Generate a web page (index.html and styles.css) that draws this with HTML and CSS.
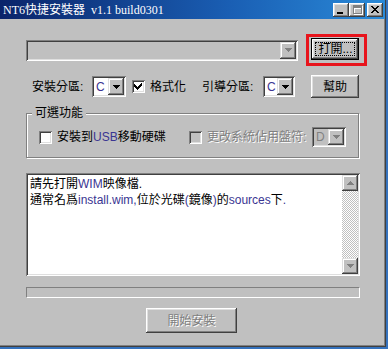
FILE: index.html
```html
<!DOCTYPE html>
<html>
<head>
<meta charset="utf-8">
<link rel="stylesheet" href="styles.css">
</head>
<body>
<div class="window">
  <div class="titlebar">
    <span class="title">NT6快捷安裝器&nbsp;&nbsp;v1.1 build0301</span>
    <div class="tbtns">
      <span class="tbtn"><svg width="16" height="14" shape-rendering="crispEdges"><rect x="4" y="9" width="6" height="2" fill="#000"/></svg></span>
      <span class="tbtn"><svg width="16" height="14" shape-rendering="crispEdges"><path d="M5 3h9v9h-9z M6 6h7v5h-7z" fill="#fff" fill-rule="evenodd"/><path d="M4 2h9v9h-9z M5 5h7v5h-7z" fill="#808080" fill-rule="evenodd"/></svg></span>
      <span class="tbtn close"><svg width="16" height="14" shape-rendering="crispEdges"><path d="M4 3h2v1h1v1h2v-1h1v-1h2v1h-1v1h-1v1h-1v1h1v1h1v1h1v1h-2v-1h-1v-1h-2v1h-1v1h-2v-1h1v-1h1v-1h1v-1h-1v-1h-1v-1h-1z" fill="#000"/></svg></span>
    </div>
  </div>
  <div class="content">
    <div class="row1">
      <div class="combo sunken wide disabled">
        <span class="val"></span>
        <span class="drop"><svg width="7" height="4" shape-rendering="crispEdges"><path d="M0 0h7v1h-1v1h-1v1h-1v1h-1v-1h-1v-1h-1v-1h-1z" fill="#808080"/></svg></span>
      </div>
      <div class="highlight">
        <button class="btn default">打開...</button>
      </div>
    </div>

    <div class="row2">
      <span class="label l-part">安裝分區:</span>
      <div class="combo sunken c-small">
        <span class="val"><span class="en">C</span></span>
        <span class="drop"><svg width="7" height="4" shape-rendering="crispEdges"><path d="M0 0h7v1h-1v1h-1v1h-1v1h-1v-1h-1v-1h-1v-1h-1z" fill="#000"/></svg></span>
      </div>
      <span class="check sunken chk-format"><svg width="9" height="9" shape-rendering="crispEdges"><path d="M7 1h1v3h-1v1h-1v1h-1v1h-1v1h-1v-1h-1v-1h-1v-1h-1v-3h1v1h1v1h1v1h1v-1h1v-1h1v-1h1z" fill="#000"/></svg></span>
      <span class="label l-format">格式化</span>
      <span class="label l-boot">引導分區:</span>
      <div class="combo sunken c-boot">
        <span class="val"><span class="en">C</span></span>
        <span class="drop"><svg width="7" height="4" shape-rendering="crispEdges"><path d="M0 0h7v1h-1v1h-1v1h-1v1h-1v-1h-1v-1h-1v-1h-1z" fill="#000"/></svg></span>
      </div>
      <button class="btn help">幫助</button>
    </div>

    <div class="group">
      <div class="group-title">可選功能</div>
      <div class="group-row">
        <span class="check sunken chk-usb"></span>
        <span class="label l-usb">安裝到<span class="en">USB</span>移動硬碟</span>
        <span class="check sunken disabled-check"></span>
        <span class="label dis l-drive">更改系統佔用盤符:</span>
        <div class="combo sunken disabled c-drive">
          <span class="val dis-val">D</span>
          <span class="drop"><svg width="7" height="4" shape-rendering="crispEdges"><path d="M0 0h7v1h-1v1h-1v1h-1v1h-1v-1h-1v-1h-1v-1h-1z" fill="#808080"/></svg></span>
        </div>
      </div>
    </div>

    <div class="textbox sunken">
      <div class="text">
        <div>請先打開<span class="en">WIM</span>映像檔.</div>
        <div>通常名爲<span class="en">install.wim,</span>位於光碟<span class="en">(</span>鏡像<span class="en">)</span>的<span class="en">sources</span>下<span class="en">.</span></div>
      </div>
      <div class="vscroll">
        <span class="sbtn"><svg width="7" height="4" shape-rendering="crispEdges"><path d="M3 0h1v1h1v1h1v1h1v1h-7v-1h1v-1h1v-1h1z" fill="#808080"/></svg></span>
        <span class="track"></span>
        <span class="sbtn"><svg width="7" height="4" shape-rendering="crispEdges"><path d="M0 0h7v1h-1v1h-1v1h-1v1h-1v-1h-1v-1h-1v-1h-1z" fill="#808080"/></svg></span>
      </div>
    </div>

    <div class="progress"></div>

    <div class="start-row">
      <button class="btn start"><span class="dis">開始安裝</span></button>
    </div>
  </div>
</div>
</body>
</html>
```

FILE: styles.css
```css
html, body {
  margin: 0;
  padding: 0;
}
body {
  width: 388px;
  height: 349px;
  background: #3572bd;
  overflow: hidden;
  font-family: "Liberation Sans", "Noto Sans CJK TC", sans-serif;
  font-size: 12px;
  color: #000;
}
.window {
  width: 386px;
  height: 347px;
  box-sizing: border-box;
  background: #c0c0c0;
  border-right: 1px solid #404040;
  border-bottom: 1px solid #404040;
  box-shadow: inset -1px -1px #808080;
  display: flex;
  flex-direction: column;
}
.titlebar {
  height: 19px;
  flex: none;
  background: linear-gradient(to right, #0a246a 0%, #1a5fb4 60%, #2a8ad8 100%);
  display: flex;
  align-items: center;
  justify-content: space-between;
  padding-left: 3px;
  padding-right: 2px;
}
.title {
  color: #fff;
  font-family: "Liberation Serif", "Noto Sans CJK TC", serif;
  font-size: 12px;
  line-height: 14px;
  white-space: nowrap;
  margin-top: 1px;
}
.tbtns {
  display: flex;
  align-items: center;
  margin-top: 1px;
}
.tbtn {
  width: 16px;
  height: 14px;
  background: #c0c0c0;
  box-shadow: inset -1px -1px #404040, inset 1px 1px #fff, inset -2px -2px #808080, inset 2px 2px #dfdfdf;
  display: block;
}
.tbtn svg { display: block; }
.tbtn.close { margin-left: 2px; }

.content {
  padding-left: 26px;
  display: flex;
  flex-direction: column;
}

.sunken {
  box-shadow: inset 1px 1px #808080, inset -1px -1px #fff, inset 2px 2px #404040, inset -2px -2px #dfdfdf;
}
.btn {
  font: inherit;
  color: #000;
  background: #c0c0c0;
  border: none;
  padding: 0;
  margin: 0;
  box-sizing: border-box;
  box-shadow: inset -1px -1px #404040, inset 1px 1px #fff, inset -2px -2px #808080, inset 2px 2px #dfdfdf;
  display: flex;
  align-items: center;
  justify-content: center;
  line-height: 14px;
}

.row1 {
  margin-top: 15px;
  display: flex;
  align-items: center;
  height: 32px;
}
.combo {
  box-sizing: border-box;
  height: 21px;
  padding: 2px;
  background: #fff;
  display: flex;
  align-items: stretch;
}
.combo.disabled { background: #c0c0c0; }
.combo .val {
  flex: 1;
  display: flex;
  align-items: center;
  padding-left: 2px;
  line-height: 14px;
}
.combo .drop {
  width: 16px;
  flex: none;
  background: #c0c0c0;
  box-shadow: inset -1px -1px #404040, inset 1px 1px #dfdfdf, inset -2px -2px #808080, inset 2px 2px #fff;
  display: flex;
  align-items: center;
  justify-content: center;
}
.combo .drop svg { display: block; }
.wide { width: 272px; }
.highlight {
  margin-left: 8px;
  border: 3px solid #e8141c;
  padding: 1px 5px 3px 2px;
  display: flex;
}
.btn.default {
  width: 48px;
  height: 22px;
  border: 1px solid #000;
  box-shadow: inset -1px -1px #404040, inset 1px 1px #fff, inset -2px -2px #808080, inset 2px 2px #dfdfdf;
  outline: 1px dotted #000;
  outline-offset: -5px;
  padding-left: 1px;
}

.row2 {
  margin-top: 9px;
  height: 23px;
  display: flex;
  align-items: center;
}
.label {
  white-space: nowrap;
  line-height: 14px;
}
.l-part { margin-left: 6px; width: 60px; }
.c-small { width: 34px; }
.check {
  width: 13px;
  height: 13px;
  box-sizing: border-box;
  background: #fff;
  flex: none;
  display: flex;
  align-items: center;
  justify-content: center;
}
.check svg { display: block; margin: 0 0 0 0; }
.chk-format { margin-left: 6px; }
.l-format { margin-left: 5px; width: 52px; }
.l-boot { width: 61px; }
.c-boot { width: 32px; }
.help {
  width: 48px;
  height: 23px;
  margin-left: 16px;
}

.group {
  margin-top: 15px;
  width: 333px;
  height: 45px;
  box-sizing: border-box;
  border: 1px solid #808080;
  box-shadow: inset 1px 1px #fff, 1px 1px #fff;
}
.group-title {
  margin-top: -7px;
  margin-left: 5px;
  padding: 0 3px;
  width: fit-content;
  background: #c0c0c0;
  line-height: 13px;
}
.group-row {
  margin-top: 7px;
  height: 20px;
  display: flex;
  align-items: center;
}
.chk-usb { margin-left: 12px; }
.l-usb { margin-left: 5px; width: 132px; }
.disabled-check { background: #c0c0c0; }
.l-drive { margin-left: 5px; width: 105px; }
.dis, .label.dis {
  color: #808080;
  text-shadow: 1px 1px 0 #fff;
}
.c-drive { width: 34px; height: 20px; }
.dis-val { color: #808080; }

.en { color: #3a3592; }

.textbox {
  margin-top: 15px;
  width: 334px;
  height: 103px;
  box-sizing: border-box;
  padding: 2px;
  background: #fff;
  display: flex;
}
.text {
  flex: 1;
  padding: 1px 0 0 2px;
  line-height: 16px;
  white-space: nowrap;
}
.vscroll {
  width: 16px;
  display: flex;
  flex-direction: column;
}
.sbtn {
  height: 16px;
  flex: none;
  background: #c0c0c0;
  box-shadow: inset -1px -1px #404040, inset 1px 1px #dfdfdf, inset -2px -2px #808080, inset 2px 2px #fff;
  display: flex;
  align-items: center;
  justify-content: center;
}
.sbtn svg { display: block; }
.track {
  flex: 1;
  background: repeating-conic-gradient(#c0c0c0 0 25%, #ffffff 0 50%) 0 0 / 2px 2px;
}

.progress {
  margin-top: 11px;
  width: 334px;
  height: 11px;
  box-sizing: border-box;
  border-top: 1px solid #808080;
  border-left: 1px solid #808080;
  border-right: 1px solid #fff;
  border-bottom: 1px solid #fff;
}

.start-row {
  margin-top: 10px;
  display: flex;
}
.start {
  margin-left: 120px;
  width: 91px;
  height: 25px;
}
```
